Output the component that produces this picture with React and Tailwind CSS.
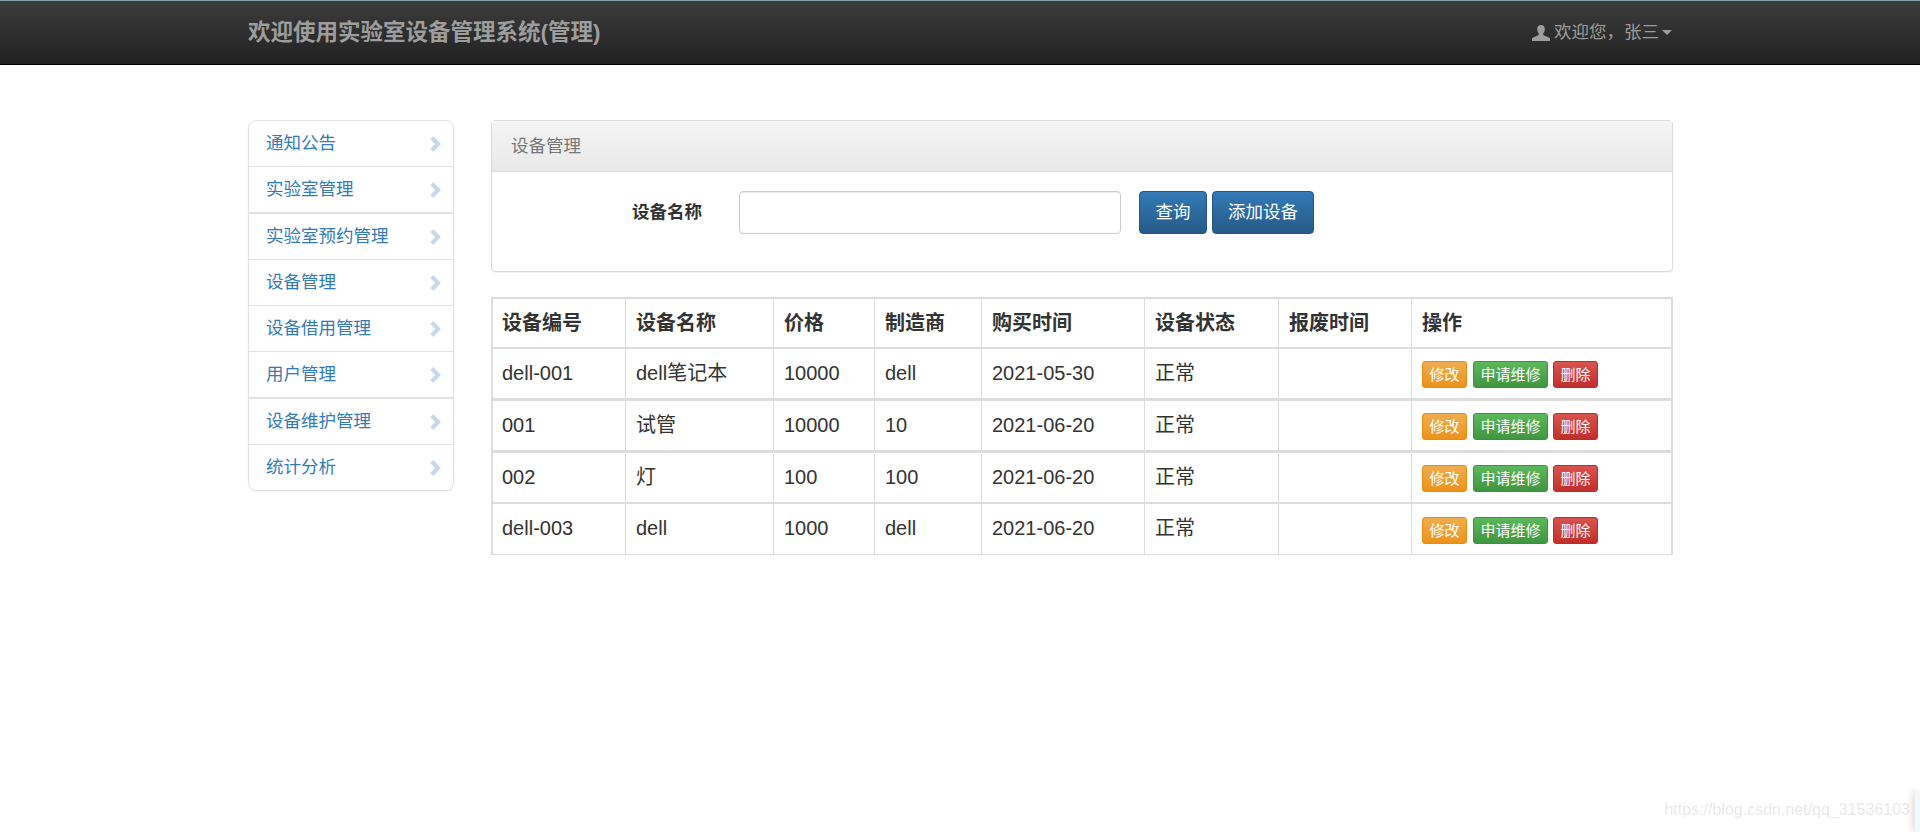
const font = "font-['Liberation_Sans','Noto_Sans_CJK_SC',sans-serif]"

const menu = [
  { label: '通知公告', thick: false },
  { label: '实验室管理', thick: true },
  { label: '实验室预约管理', thick: false },
  { label: '设备管理', thick: false },
  { label: '设备借用管理', thick: false },
  { label: '用户管理', thick: true },
  { label: '设备维护管理', thick: false },
  { label: '统计分析', thick: false },
]

const columns = [
  { label: '设备编号', width: 'w-[133px]' },
  { label: '设备名称', width: 'w-[148px]' },
  { label: '价格', width: 'w-[101px]' },
  { label: '制造商', width: 'w-[107px]' },
  { label: '购买时间', width: 'w-[163px]' },
  { label: '设备状态', width: 'w-[134px]' },
  { label: '报废时间', width: 'w-[133px]' },
  { label: '操作', width: '' },
]

const rows = [
  { cells: ['dell-001', 'dell笔记本', '10000', 'dell', '2021-05-30', '正常', ''], rule: 'border-b-[3px]', height: 'h-[52px]' },
  { cells: ['001', '试管', '10000', '10', '2021-06-20', '正常', ''], rule: 'border-b-[3px]', height: 'h-[52px]' },
  { cells: ['002', '灯', '100', '100', '2021-06-20', '正常', ''], rule: 'border-b-2', height: 'h-[51px]' },
  { cells: ['dell-003', 'dell', '1000', 'dell', '2021-06-20', '正常', ''], rule: 'border-b-0', height: 'h-[50px]' },
]

function Chevron() {
  return (
    <svg viewBox="0 0 12 16" className="w-[12px] h-[16px] shrink-0 mt-px" fill="none">
      <path d="M2.8 1.5 L9 8 L2.8 14.5" stroke="#c6d9ec" strokeWidth="4.2" />
    </svg>
  )
}

function ActionButton({ className, children }) {
  return (
    <button className={`h-[27px] rounded-[3px] border text-[15px] leading-none text-white ${className}`}>
      {children}
    </button>
  )
}

function Sidebar() {
  return (
    <ul className="w-[206px] shrink-0 rounded-[8px] border border-[#e3e3e3] bg-white shadow-[0_1px_2px_rgba(0,0,0,0.05)]">
      {menu.map((item, index) => (
        <li
          key={item.label}
          className={`flex items-center justify-between pl-[17px] pr-[12px] text-[17.5px] text-[#337ab7] ${
            index === menu.length - 1 ? 'h-[45px]' : item.thick ? 'h-[47px] border-b-2 border-[#e3e3e3]' : 'h-[46px] border-b border-[#e3e3e3]'
          }`}
        >
          {item.label}
          <Chevron />
        </li>
      ))}
    </ul>
  )
}

function SearchPanel() {
  return (
    <div className="h-[152px] rounded-[4px] border border-[#dcdcdc] bg-white shadow-[0_1px_1px_rgba(0,0,0,0.05)]">
      <div className="flex h-[51px] items-center border-b border-[#dddddd] bg-gradient-to-b from-[#f5f5f5] to-[#e8e8e8] pl-[19px] text-[17.5px] text-[#777777]">
        设备管理
      </div>
      <div className="flex items-center pt-[19px]">
        <label className="ml-[140px] w-[107px] text-[17.5px] font-bold text-[#333333]">设备名称</label>
        <input className="h-[43px] w-[382px] rounded-[4px] border border-[#cccccc] bg-white shadow-[inset_0_1px_1px_rgba(0,0,0,0.075)]" />
        <button className="ml-[18px] h-[43px] w-[68px] rounded-[4px] border border-[#245580] bg-gradient-to-b from-[#337ab7] to-[#265a88] text-[17.5px] text-white">
          查询
        </button>
        <button className="ml-[5px] h-[43px] w-[102px] rounded-[4px] border border-[#245580] bg-gradient-to-b from-[#337ab7] to-[#265a88] text-[17.5px] text-white">
          添加设备
        </button>
      </div>
    </div>
  )
}

function DeviceTable() {
  return (
    <table className="mt-[25px] w-[1182px] table-fixed border-separate border-spacing-0 border-2 border-b border-[#dddddd] text-[20px] text-[#333333]">
      <thead>
        <tr className="h-[50px]">
          {columns.map((col, index) => (
            <th
              key={col.label}
              className={`${col.width} border-b-2 border-[#dddddd] ${index === 0 ? 'pl-[9px]' : 'pl-[10px]'} text-left font-bold ${index < columns.length - 1 ? 'border-r' : ''}`}
            >
              {col.label}
            </th>
          ))}
        </tr>
      </thead>
      <tbody>
        {rows.map((row) => (
          <tr key={row.cells[0] + row.cells[4]} className={row.height}>
            {row.cells.map((cell, index) => (
              <td key={index} className={`${row.rule} border-r border-[#dddddd] pb-[2px] ${index === 0 ? 'pl-[9px]' : 'pl-[10px]'}`}>
                {cell}
              </td>
            ))}
            <td className={`${row.rule} border-[#dddddd] pl-[10px]`}>
              <div className="mt-[2px] flex items-center">
                <ActionButton className="w-[45px] border-[#e38d13] bg-gradient-to-b from-[#f0ad4e] to-[#eb9316]">修改</ActionButton>
                <ActionButton className="ml-[6px] w-[75px] border-[#3e8f3e] bg-gradient-to-b from-[#5cb85c] to-[#419641]">申请维修</ActionButton>
                <ActionButton className="ml-[5px] w-[45px] border-[#b92c28] bg-gradient-to-b from-[#d9534f] to-[#c12e2a]">删除</ActionButton>
              </div>
            </td>
          </tr>
        ))}
      </tbody>
    </table>
  )
}

export default function App() {
  return (
    <div className={`relative h-[832px] overflow-hidden bg-white ${font}`}>
      <header className="h-[65px] border-t border-b border-t-[#7fa3a8] border-b-black bg-gradient-to-b from-[#3c3c3c] to-[#222222]">
        <div className="mx-auto flex h-full w-[1424px] items-center justify-between">
          <h1 className="text-[22.5px] font-bold text-[#9d9d9d]">欢迎使用实验室设备管理系统(管理)</h1>
          <div className="flex items-center text-[17.5px] text-[#9d9d9d]">
            <svg viewBox="0 0 20 20" className="mr-[4px] h-[18px] w-[18px]" fill="#9d9d9d">
              <path d="M10 1c-3 0-4.400 2.200-4.200 5 .1 1.800.7 3.300 1.700 4.400.3 1.300-.2 2.100-1.500 2.600-2 .8-5.500 1.500-6 3.200V19h20v-2.800c-.5-1.700-4-2.400-6-3.200-1.300-.5-1.800-1.300-1.500-2.600 1-1.100 1.600-2.600 1.700-4.400C14.400 3.200 13 1 10 1z" />
            </svg>
            欢迎您，张三
            <span className="ml-[3px] h-0 w-0 border-x-[5px] border-t-[5px] border-x-transparent border-t-[#9d9d9d]" />
          </div>
        </div>
      </header>

      <main className="mx-auto flex w-[1424px] items-start gap-[37px] pt-[55px]">
        <Sidebar />
        <div className="w-[1182px]">
          <SearchPanel />
          <DeviceTable />
        </div>
      </main>

      <div className="absolute bottom-[10px] right-[10px] text-[16px] text-[#e9e9e9] blur-[0.6px]">https://blog.csdn.net/qq_31536103</div>
      <div className="absolute bottom-0 right-0 h-[41px] w-[5px] rounded-tl-[3px] bg-[#f3f8fd] shadow-[-3px_0_6px_rgba(0,0,0,0.15)]" />
    </div>
  )
}
